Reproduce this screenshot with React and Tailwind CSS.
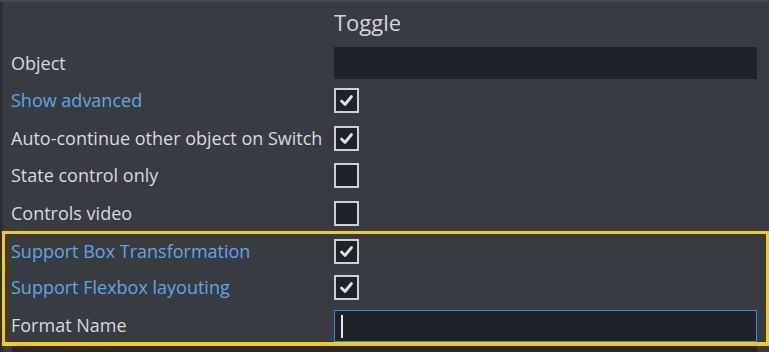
import React from "react";

const Check = ({ checked }) => (
  <div className="w-[25px] h-[25px] border-2 border-[#cfd0d2] bg-[#1f2226] flex items-center justify-center">
    {checked && (
      <svg width="15" height="15" viewBox="0 0 15 15">
        <path d="M2.5 8 L6 11.5 L12.5 3.5" fill="none" stroke="#e0e0e0" strokeWidth="2.8" strokeLinecap="round" strokeLinejoin="round" />
      </svg>
    )}
  </div>
);

const Row = ({ label, blue, h = "h-[38px]", children, pad = "pl-[11px]" }) => (
  <div className={`flex items-center ${h}`}>
    <div className={`w-[334px] shrink-0 ${pad} ${blue ? "text-[#5ea7e6]" : "text-[#d8dadd]"} whitespace-nowrap`}>
      {label}
    </div>
    <div className="flex-1 pr-[12px]">{children}</div>
  </div>
);

export default function App() {
  return (
    <div
      className="w-[769px] h-[352px] bg-[#383b40] flex flex-col overflow-hidden text-[18px]"
      style={{ fontFamily: '"Open Sans", "Noto Sans", sans-serif' }}
    >
      <div className="h-[2px] bg-[#46494e] shrink-0" />
      <div className="flex flex-1 min-h-0">
        <div className="w-[3px] bg-[#2b2d31] shrink-0" />
        <div className="flex-1 flex flex-col -ml-[3px]">
          {/* header */}
          <div className="h-[42px] flex items-center pl-[334px] text-[22px] text-[#d2d5d8] pb-[2px]">
            Toggle
          </div>

          <Row label="Object">
            <div className="h-[32px] bg-[#1f2226]" />
          </Row>
          <Row label="Show advanced" blue h="h-[37px]">
            <Check checked />
          </Row>
          <Row label="Auto-continue other object on Switch">
            <Check checked />
          </Row>
          <Row label="State control only" h="h-[37px]">
            <Check />
          </Row>
          <Row label="Controls video">
            <Check />
          </Row>

          {/* highlighted group */}
          <div className="ml-[2px] border-[3px] border-b-4 border-[#ffcc00] flex flex-col -mt-px">
            <Row label="Support Box Transformation" blue h="h-[34px]" pad="pl-[6px]">
              <div className="-ml-[5px]">
                <Check checked />
              </div>
            </Row>
            <Row label="Support Flexbox layouting" blue h="h-[38px]" pad="pl-[6px]">
              <div className="-ml-[5px]">
                <Check checked />
              </div>
            </Row>
            <Row label="Format Name" h="h-[36px]" pad="pl-[6px] pt-[3px]">
              <div className="-ml-[5px] mr-[-3px] mt-[4px] h-[32px] bg-[#1f2226] border border-[#2f8fe6] flex items-center pl-[6px]">
                <div className="w-[2px] h-[23px] bg-[#e8e8e8]" />
              </div>
            </Row>
          </div>
          <div className="mx-[12px] flex-1 bg-[#25272b]" />
        </div>
      </div>
    </div>
  );
}
